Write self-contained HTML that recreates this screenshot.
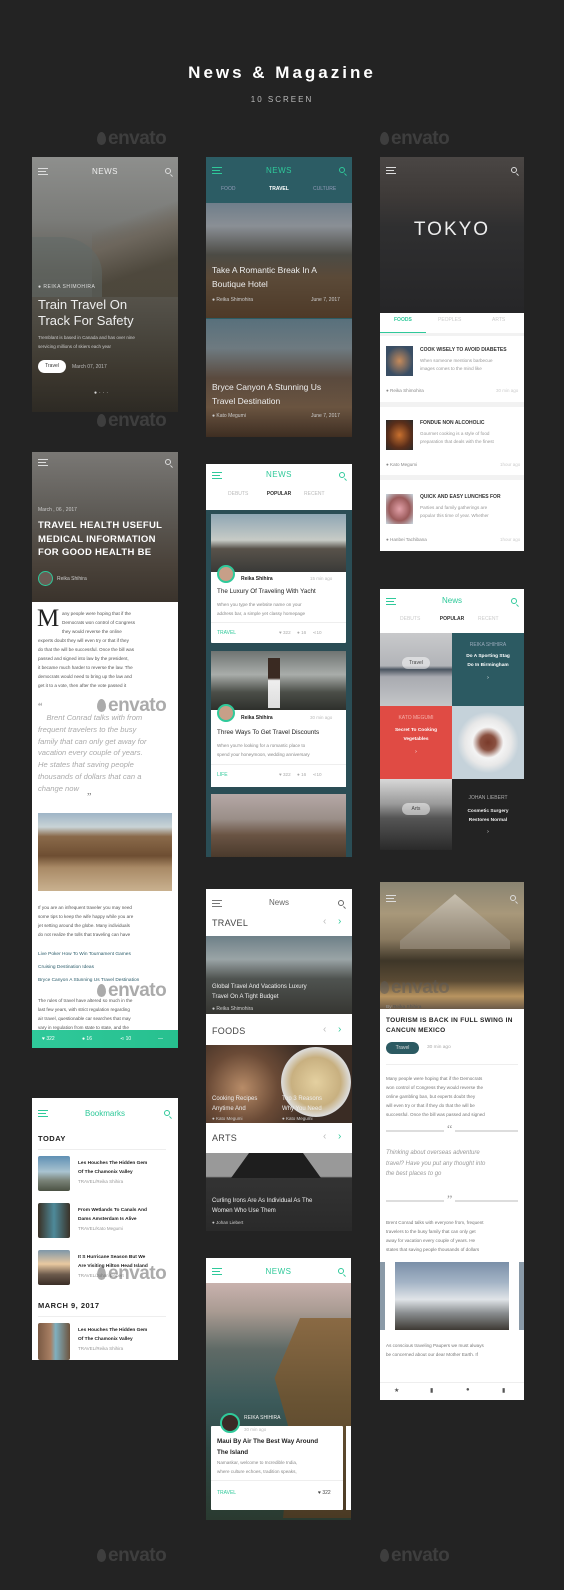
<!DOCTYPE html>
<html><head><meta charset="utf-8"><style>
*{margin:0;padding:0;box-sizing:border-box}
body{width:564px;height:1590px;background:#232323;position:relative;overflow:hidden;font-family:"Liberation Sans",sans-serif}
.a{position:absolute}
.scr{position:absolute;overflow:hidden;background:#fff}
.wm{position:absolute;color:#5a5a5a;font-size:19px;font-weight:bold;letter-spacing:-0.5px;opacity:.5}
.wm:before{content:"";display:inline-block;width:9px;height:13px;border-radius:50% 50% 50% 50%/60% 60% 40% 40%;background:#5a5a5a;margin-right:2px;vertical-align:-1px}
.t{position:absolute;white-space:nowrap}
.ham{position:absolute;width:10px;height:7px;border-top:1.5px solid;border-bottom:1.5px solid}
.ham:after{content:"";position:absolute;left:0;top:1.5px;width:8px;border-top:1.5px solid}
.srch{position:absolute;width:6px;height:6px;border:1.3px solid;border-radius:50%}
.srch:after{content:"";position:absolute;width:3px;border-top:1.3px solid;transform:rotate(45deg);left:4px;top:6px;border-color:inherit}
.gr{color:#999}
.g{color:#2fc99a}
</style></head><body>

<div class="t" style="left:0;width:564px;text-align:center;top:63px;color:#fff;font-size:17px;font-weight:bold;letter-spacing:3px">News &amp; Magazine</div>
<div class="t" style="left:0;width:564px;text-align:center;top:95px;color:#bbb;font-size:8px;letter-spacing:2px">10 SCREEN</div>

<div class="wm" style="left:97px;top:128px">envato</div>
<div class="wm" style="left:380px;top:128px">envato</div>

<!-- COL1 screen1 -->
<div class="scr" style="left:32px;top:157px;width:146px;height:255px;background:linear-gradient(180deg,#8e8f8d 0%,#7a7b78 25%,#5e5a52 45%,#4d4a42 65%,#3c372e 85%,#2d2a24 100%)">
 <div class="a" style="left:60px;top:30px;width:100px;height:110px;background:linear-gradient(160deg,transparent 30%,#6d655a 45%,#4a4438 70%);opacity:.8"></div>
 <div class="a" style="left:0;top:80px;width:70px;height:60px;background:#5f6a68;opacity:.5;border-radius:0 60% 0 0"></div>
 <div class="ham" style="left:6px;top:11px;color:#ddd"></div>
 <div class="t" style="left:0;width:146px;text-align:center;top:10px;color:#eee;font-size:8px;letter-spacing:.5px">NEWS</div>
 <div class="srch" style="right:7px;top:11px;color:#ddd"></div>
 <div class="t" style="left:6px;top:127px;color:#ddd;font-size:5px;letter-spacing:.5px">● REIKA SHIMOHIRA</div>
 <div class="t" style="left:6px;top:140px;color:#eee;font-size:13px;line-height:16px">Train Travel On<br>Track For Safety</div>
 <div class="t" style="left:6px;top:176px;color:#ccc;font-size:4.5px;line-height:9px">Tremblant is based in Canada and has over nine<br>servicing millions of skiers each year</div>
 <div class="a" style="left:6px;top:203px;width:28px;height:13px;background:#fff;border-radius:7px;font-size:5px;text-align:center;line-height:13px;color:#333">Travel</div>
 <div class="t" style="left:40px;top:207px;color:#bbb;font-size:5px">March 07, 2017</div>
 <div class="t" style="left:62px;top:233px;color:#ddd;font-size:5px;letter-spacing:2px">●···</div>
</div>
<div class="wm" style="left:97px;top:410px">envato</div>

<!-- COL1 screen2 -->
<div class="scr" style="left:32px;top:452px;width:146px;height:596px">
 <div class="a" style="left:0;top:0;width:146px;height:150px;background:linear-gradient(180deg,#7a7875 0%,#5e5b56 40%,#4a423a 75%,#3a332c 100%)"></div>
 <div class="ham" style="left:6px;top:7px;color:#ddd"></div>
 <div class="srch" style="right:7px;top:7px;color:#ddd"></div>
 <div class="t" style="left:6px;top:55px;color:#ccc;font-size:5px">March , 06 , 2017</div>
 <div class="t" style="left:6px;top:67px;color:#fff;font-size:9.5px;font-weight:bold;line-height:13.5px;letter-spacing:.3px">TRAVEL HEALTH USEFUL<br>MEDICAL INFORMATION<br>FOR GOOD HEALTH BE</div>
 <div class="a" style="left:6px;top:119px;width:15px;height:15px;border-radius:50%;border:1.5px solid #2fc99a;background:#6a5c55"></div>
 <div class="t" style="left:25px;top:124px;color:#ccc;font-size:5px">Reika Shihira</div>
 <div class="t" style="left:5px;top:153px;color:#222;font-size:25px;font-family:'Liberation Serif',serif;font-weight:normal">M</div>
 <div class="t" style="left:30px;top:157px;color:#555;font-size:4.6px;line-height:9px">any people were hoping that if the<br>Democrats won control of Congress<br>they would reverse the online</div>
 <div class="t" style="left:6px;top:184px;color:#555;font-size:4.6px;line-height:9px">experts doubt they will even try or that if they<br>do that the will be successful. Once the bill was<br>passed and signed into law by the president,<br>it became much harder to reverse the law. The<br>democrats would need to bring up the law and<br>get it to a vote, then after the vote passed it</div>
 <div class="t" style="left:6px;top:250px;color:#777;font-size:10px;font-family:'Liberation Serif',serif">“</div>
 <div class="t" style="left:6px;top:260px;color:#aaa;font-size:7.6px;font-style:italic;line-height:11.8px">&nbsp;&nbsp;&nbsp;&nbsp;Brent Conrad talks with from<br>frequent travelers to the busy<br>family that can only get away for<br>vacation every couple of years.<br>He states that saving people<br>thousands of dollars that can a<br>change now</div>
 <div class="t" style="left:55px;top:340px;color:#777;font-size:10px;font-family:'Liberation Serif',serif">”</div>
 <div class="a" style="left:6px;top:361px;width:134px;height:78px;background:linear-gradient(180deg,#9fb5c6 0%,#c9d3d6 18%,#8a6a4a 30%,#6e4e32 55%,#a98a66 70%,#c9b18f 100%)"></div>
 <div class="t" style="left:6px;top:451px;color:#555;font-size:4.6px;line-height:9px">If you are an infrequent traveler you may need<br>some tips to keep the wife happy while you are<br>jet setting around the globe. Many individuals<br>do not realize the tolls that traveling can have</div>
 <div class="t" style="left:6px;top:496px;color:#2c5d6b;font-size:4.8px;line-height:13px">Live Poker How To Win Tournament Games<br>Cruising Destination Ideas<br>Bryce Canyon A Stunning Us Travel Destination</div>
 <div class="t" style="left:6px;top:544px;color:#555;font-size:4.6px;line-height:9px">The rules of travel have altered so much in the<br>last few years, with strict regulation regarding<br>air travel, questionable car searches that may<br>vary in regulation from state to state, and the</div>
 <div class="a" style="left:0;top:578px;width:146px;height:18px;background:linear-gradient(90deg,#2fc99a,#27c08f);color:#fff;font-size:5px;line-height:18px">
  <span class="a" style="left:10px">♥ 322</span><span class="a" style="left:50px">● 16</span><span class="a" style="left:88px">⋖ 10</span><span class="a" style="left:126px">—</span>
 </div>
</div>
<div class="wm" style="left:97px;top:695px">envato</div>
<div class="wm" style="left:97px;top:980px">envato</div>

<!-- COL1 bookmarks -->
<div class="scr" style="left:32px;top:1098px;width:146px;height:262px">
 <div class="ham" style="left:6px;top:12px;color:#2fc99a"></div>
 <div class="t g" style="left:0;width:146px;text-align:center;top:11px;font-size:8px">Bookmarks</div>
 <div class="srch" style="right:8px;top:12px;color:#2fc99a"></div>
 <div class="t" style="left:6px;top:36px;color:#222;font-size:7.5px;font-weight:bold;letter-spacing:.5px">TODAY</div>
 <div class="a" style="left:6px;top:51px;width:128px;height:1px;background:#eee"></div>
 <div class="a" style="left:6px;top:58px;width:32px;height:35px;border-radius:2px;background:linear-gradient(180deg,#5f90b4,#a9c3d0 45%,#7a8378 70%,#4b5244)"></div>
 <div class="t" style="left:46px;top:61px;color:#222;font-size:4.8px;font-weight:bold;line-height:9px">Les Houches The Hidden Gem<br>Of The Chamonix Valley</div>
 <div class="t gr" style="left:46px;top:81px;font-size:4.5px">TRAVEL/Reika Shihira</div>
 <div class="a" style="left:6px;top:105px;width:32px;height:35px;border-radius:2px;background:linear-gradient(90deg,#3a3024,#4e8a9a 50%,#3a3228)"></div>
 <div class="t" style="left:46px;top:108px;color:#222;font-size:4.8px;font-weight:bold;line-height:9px">From Wetlands To Canals And<br>Dams Amsterdam Is Alive</div>
 <div class="t gr" style="left:46px;top:128px;font-size:4.5px">TRAVEL/Kato Megumi</div>
 <div class="a" style="left:6px;top:152px;width:32px;height:35px;border-radius:2px;background:linear-gradient(180deg,#7e97a9,#e9c9a0 40%,#6c5a4c 70%,#3a2e26)"></div>
 <div class="t" style="left:46px;top:155px;color:#222;font-size:4.8px;font-weight:bold;line-height:9px">It S Hurricane Season But We<br>Are Visiting Hilton Head Island</div>
 <div class="t gr" style="left:46px;top:175px;font-size:4.5px">TRAVEL/Johan Liebert</div>
 <div class="t" style="left:6px;top:203px;color:#222;font-size:7.5px;font-weight:bold;letter-spacing:.5px">MARCH 9, 2017</div>
 <div class="a" style="left:6px;top:218px;width:128px;height:1px;background:#eee"></div>
 <div class="a" style="left:6px;top:225px;width:32px;height:37px;border-radius:2px;background:linear-gradient(90deg,#7a5a44,#a98064 40%,#7fb0c0 55%,#6e543e)"></div>
 <div class="t" style="left:46px;top:228px;color:#222;font-size:4.8px;font-weight:bold;line-height:9px">Les Houches The Hidden Gem<br>Of The Chamonix Valley</div>
 <div class="t gr" style="left:46px;top:248px;font-size:4.5px">TRAVEL/Reika Shihira</div>
</div>
<div class="wm" style="left:97px;top:1263px">envato</div>

<!-- COL2 screenA -->
<div class="scr" style="left:206px;top:157px;width:146px;height:280px;background:#2c5c64">
 <div class="ham" style="left:6px;top:10px;color:#2fc99a"></div>
 <div class="t g" style="left:0;width:146px;text-align:center;top:9px;font-size:8px;letter-spacing:.5px">NEWS</div>
 <div class="srch" style="right:7px;top:10px;color:#2fc99a"></div>
 <div class="t" style="left:15px;top:29px;color:#aac;font-size:5px;opacity:.8">FOOD</div>
 <div class="t" style="left:0;width:146px;text-align:center;top:29px;color:#fff;font-size:5px;font-weight:bold">TRAVEL</div>
 <div class="t" style="left:107px;top:29px;color:#aac;font-size:5px;opacity:.8">CULTURE</div>
 <div class="a" style="left:0;top:46px;width:146px;height:115px;background:linear-gradient(180deg,#6f7e8a 0%,#8a8f95 20%,#4c4b45 45%,#5b4a38 65%,#4e3a28 100%)"></div>
 <div class="t" style="left:6px;top:106px;color:#eee;font-size:8.5px;line-height:14px">Take A Romantic Break In A<br>Boutique Hotel</div>
 <div class="t" style="left:6px;top:140px;color:#ccc;font-size:5px">● Reika Shimohira</div>
 <div class="t" style="left:105px;top:140px;color:#ccc;font-size:5px">June 7, 2017</div>
 <div class="a" style="left:0;top:162px;width:146px;height:118px;background:linear-gradient(180deg,#58707c 0%,#6e7a80 25%,#5a4a3e 50%,#6a5440 75%,#3e2e22 100%)"></div>
 <div class="t" style="left:6px;top:223px;color:#eee;font-size:8.5px;line-height:14px">Bryce Canyon A Stunning Us<br>Travel Destination</div>
 <div class="t" style="left:6px;top:256px;color:#ccc;font-size:5px">● Kato Megumi</div>
 <div class="t" style="left:105px;top:256px;color:#ccc;font-size:5px">June 7, 2017</div>
</div>

<!-- COL2 screenB -->
<div class="scr" style="left:206px;top:464px;width:146px;height:393px;background:#2a4d55">
 <div class="a" style="left:0;top:0;width:146px;height:46px;background:#fff"></div>
 <div class="ham" style="left:6px;top:8px;color:#2fc99a"></div>
 <div class="t g" style="left:0;width:146px;text-align:center;top:6px;font-size:8px;letter-spacing:.5px">NEWS</div>
 <div class="srch" style="right:7px;top:8px;color:#2fc99a"></div>
 <div class="t" style="left:22px;top:27px;color:#bbb;font-size:5px">DEBUTS</div>
 <div class="t" style="left:0;width:146px;text-align:center;top:27px;color:#333;font-size:5px;font-weight:bold">POPULAR</div>
 <div class="t" style="left:98px;top:27px;color:#bbb;font-size:5px">RECENT</div>
 <div class="a" style="left:5px;top:50px;width:135px;height:129px;background:#fff;border-radius:1px"></div>
 <div class="a" style="left:5px;top:50px;width:135px;height:58px;background:linear-gradient(180deg,#8fa6b4,#c7cbc6 45%,#58524a 60%,#3a3a38)"></div>
 <div class="a" style="left:11px;top:101px;width:18px;height:18px;border-radius:50%;background:#c79f88;border:2px solid #2fc99a"></div>
 <div class="t" style="left:35px;top:112px;color:#222;font-size:5px;font-weight:bold">Reika Shihira</div>
 <div class="t" style="left:104px;top:112px;color:#bbb;font-size:4.5px">15 min ago</div>
 <div class="t" style="left:11px;top:124px;color:#222;font-size:6.3px">The Luxury Of Traveling With Yacht</div>
 <div class="t" style="left:11px;top:136px;color:#888;font-size:4.6px;line-height:9px">When you type the website name on your<br>address bar, a simple yet classy homepage</div>
 <div class="a" style="left:5px;top:158px;width:135px;height:1px;background:#eee"></div>
 <div class="t g" style="left:11px;top:166px;font-size:5px">TRAVEL</div>
 <div class="t" style="left:73px;top:166px;color:#aaa;font-size:4.6px">♥ 322 &nbsp;&nbsp;&nbsp; ● 16 &nbsp;&nbsp;&nbsp; ⋖10</div>
 <div class="a" style="left:5px;top:187px;width:135px;height:136px;background:#fff"></div>
 <div class="a" style="left:5px;top:187px;width:135px;height:59px;background:linear-gradient(180deg,#6f7472,#a9adaa 40%,#4b4e48 70%,#2e302c)"></div>
 <div class="a" style="left:62px;top:194px;width:12px;height:50px;background:linear-gradient(180deg,#3a2a22 0%,#3a2a22 40%,#eee 45%,#ddd)"></div>
 <div class="a" style="left:11px;top:240px;width:18px;height:18px;border-radius:50%;background:#c79f88;border:2px solid #2fc99a"></div>
 <div class="t" style="left:35px;top:251px;color:#222;font-size:5px;font-weight:bold">Reika Shihira</div>
 <div class="t" style="left:104px;top:251px;color:#bbb;font-size:4.5px">30 min ago</div>
 <div class="t" style="left:11px;top:265px;color:#222;font-size:6.3px">Three Ways To Get Travel Discounts</div>
 <div class="t" style="left:11px;top:277px;color:#888;font-size:4.6px;line-height:9px">When you're looking for a romantic place to<br>spend your honeymoon, wedding anniversary</div>
 <div class="a" style="left:5px;top:300px;width:135px;height:1px;background:#eee"></div>
 <div class="t g" style="left:11px;top:308px;font-size:5px">LIFE</div>
 <div class="t" style="left:73px;top:308px;color:#aaa;font-size:4.6px">♥ 322 &nbsp;&nbsp;&nbsp; ● 16 &nbsp;&nbsp;&nbsp; ⋖10</div>
 <div class="a" style="left:5px;top:330px;width:135px;height:63px;background:linear-gradient(180deg,#b5a8a6,#9a8e88 40%,#6a5444 65%,#4a3a2c)"></div>
</div>

<!-- COL2 screenC -->
<div class="scr" style="left:206px;top:889px;width:146px;height:342px">
 <div class="ham" style="left:6px;top:11px;color:#777"></div>
 <div class="t" style="left:0;width:146px;text-align:center;top:9px;color:#666;font-size:8px">News</div>
 <div class="srch" style="right:8px;top:11px;color:#666"></div>
 <div class="t" style="left:6px;top:29px;color:#444;font-size:9px;letter-spacing:.3px">TRAVEL</div>
 <div class="t" style="left:117px;top:27px;color:#bbb;font-size:10px">‹</div><div class="t g" style="left:132px;top:27px;font-size:10px">›</div>
 <div class="a" style="left:0;top:47px;width:146px;height:78px;background:linear-gradient(180deg,#6e8088,#9aa4a6 30%,#4f5350 55%,#363632)"></div>
 <div class="t" style="left:6px;top:93px;color:#eee;font-size:6px;line-height:10px">Global Travel And Vacations Luxury<br>Travel On A Tight Budget</div>
 <div class="t" style="left:6px;top:117px;color:#ccc;font-size:5px">● Reika Shimohira</div>
 <div class="a" style="left:0;top:125px;width:146px;height:31px;background:#fff;box-shadow:0 2px 2px rgba(0,0,0,.15)"></div>
 <div class="t" style="left:6px;top:137px;color:#444;font-size:9px;letter-spacing:.3px">FOODS</div>
 <div class="t" style="left:117px;top:135px;color:#bbb;font-size:10px">‹</div><div class="t g" style="left:132px;top:135px;font-size:10px">›</div>
 <div class="a" style="left:0;top:156px;width:146px;height:78px;background:radial-gradient(circle at 25% 55%,#b88c68 0,#6a4a36 30%,#3a2c24 60%),#3a2c24"></div>
 <div class="a" style="left:75px;top:158px;width:70px;height:70px;border-radius:50%;background:radial-gradient(#e4d0a0,#c8b080 50%,#ddd 70%,#666 72%)"></div>
 <div class="t" style="left:6px;top:205px;color:#eee;font-size:6px;line-height:10px">Cooking Recipes<br>Anytime And</div>
 <div class="t" style="left:76px;top:205px;color:#eee;font-size:6px;line-height:10px">Top 3 Reasons<br>Why You Need</div>
 <div class="t" style="left:6px;top:227px;color:#ccc;font-size:4.5px">● Kato Megumi</div>
 <div class="t" style="left:76px;top:227px;color:#ccc;font-size:4.5px">● Kato Megumi</div>
 <div class="a" style="left:0;top:234px;width:146px;height:30px;background:#fff"></div>
 <div class="t" style="left:6px;top:244px;color:#444;font-size:9px;letter-spacing:.3px">ARTS</div>
 <div class="t" style="left:117px;top:242px;color:#bbb;font-size:10px">‹</div><div class="t g" style="left:132px;top:242px;font-size:10px">›</div>
 <div class="a" style="left:0;top:264px;width:146px;height:78px;background:linear-gradient(180deg,#999 0%,#999 30%,#333 32%,#2a2a2a)"></div>
 <div class="a" style="left:25px;top:264px;width:90px;height:25px;background:#1e1e1e;clip-path:polygon(20% 0,80% 0,100% 100%,0 100%)"></div>
 <div class="t" style="left:6px;top:307px;color:#eee;font-size:6px;line-height:10px">Curling Irons Are As Individual As The<br>Women Who Use Them</div>
 <div class="t" style="left:6px;top:331px;color:#ccc;font-size:4.5px">● Johan Liebert</div>
</div>

<!-- COL2 screenD -->
<div class="scr" style="left:206px;top:1258px;width:145px;height:262px;background:#fff">
 <div class="ham" style="left:6px;top:10px;color:#2fc99a"></div>
 <div class="t g" style="left:0;width:145px;text-align:center;top:9px;font-size:8px;letter-spacing:.5px">NEWS</div>
 <div class="srch" style="right:7px;top:10px;color:#2fc99a"></div>
 <div class="a" style="left:0;top:25px;width:145px;height:237px;background:linear-gradient(180deg,#c9b2ae 0%,#a99b92 12%,#5f6a66 28%,#3c5a5a 50%,#2e4844 70%,#2a3a30 100%)"></div>
 <div class="a" style="left:60px;top:60px;width:85px;height:200px;background:linear-gradient(180deg,#8a6a44,#6a5434 40%,#4a3a24);clip-path:polygon(40% 0,100% 0,100% 100%,20% 100%,30% 60%,10% 30%)"></div>
 <div class="a" style="left:5px;top:168px;width:132px;height:84px;background:#fff;border-radius:1px"></div>
 <div class="a" style="left:140px;top:168px;width:5px;height:84px;background:#fff"></div>
 <div class="a" style="left:14px;top:155px;width:20px;height:20px;border-radius:50%;background:#3a2a26;border:2px solid #2fc99a"></div>
 <div class="t" style="left:38px;top:157px;color:#eee;font-size:5px">REIKA SHIHIRA</div>
 <div class="t" style="left:38px;top:169px;color:#bbb;font-size:4.5px">30 min ago</div>
 <div class="t" style="left:11px;top:179px;color:#222;font-size:6.3px;font-weight:bold;line-height:10.5px">Maui By Air The Best Way Around<br>The Island</div>
 <div class="t" style="left:11px;top:201px;color:#888;font-size:4.6px;line-height:8.5px">Namaskar, welcome to Incredible India,<br>where culture echoes, tradition speaks,</div>
 <div class="a" style="left:5px;top:222px;width:132px;height:1px;background:#eee"></div>
 <div class="t g" style="left:11px;top:232px;font-size:5px">TRAVEL</div>
 <div class="t" style="left:112px;top:232px;color:#444;font-size:5px">♥ 322</div>
</div>

<!-- COL3 Tokyo -->
<div class="scr" style="left:380px;top:157px;width:144px;height:394px;background:#fff">
 <div class="a" style="left:0;top:0;width:144px;height:156px;background:linear-gradient(180deg,#4a4644 0%,#3e3a38 25%,#2f2f30 45%,#262628 100%)"></div>
 <div class="ham" style="left:6px;top:10px;color:#ddd"></div>
 <div class="srch" style="right:7px;top:10px;color:#ddd"></div>
 <div class="t" style="left:0;width:144px;text-align:center;top:62px;color:#eee;font-size:19px;letter-spacing:2px">TOKYO</div>
 <div class="t g" style="left:14px;top:160px;font-size:5px;font-weight:bold">FOODS</div>
 <div class="t" style="left:58px;top:160px;color:#ccc;font-size:5px">PEOPLES</div>
 <div class="t" style="left:112px;top:160px;color:#ccc;font-size:5px">ARTS</div>
 <div class="a" style="left:0;top:175px;width:46px;height:1.5px;background:#2fc99a"></div>
 <div class="a" style="left:0;top:176px;width:144px;height:3px;background:#f2f2f2"></div>
 <div class="a" style="left:6px;top:189px;width:27px;height:30px;background:radial-gradient(#c58a5a,#3a4e64 70%)"></div>
 <div class="t" style="left:40px;top:190px;color:#333;font-size:5px;font-weight:bold">COOK WISELY TO AVOID DIABETES</div>
 <div class="t" style="left:40px;top:200px;color:#999;font-size:4.6px;line-height:8px">When someone mentions barbecue<br>images comes to the mind like</div>
 <div class="t" style="left:6px;top:231px;color:#888;font-size:4.6px">● Reika Shimohira</div>
 <div class="t" style="left:116px;top:231px;color:#ccc;font-size:4.5px">30 min ago</div>
 <div class="a" style="left:0;top:245px;width:144px;height:5px;background:#f2f2f2"></div>
 <div class="a" style="left:6px;top:263px;width:27px;height:30px;background:radial-gradient(#c8702e,#5a2e1a 60%,#2a2a2a)"></div>
 <div class="t" style="left:40px;top:263px;color:#333;font-size:5px;font-weight:bold">FONDUE NON ALCOHOLIC</div>
 <div class="t" style="left:40px;top:273px;color:#999;font-size:4.6px;line-height:8px">Gourmet cooking is a style of food<br>preparation that deals with the finest</div>
 <div class="t" style="left:6px;top:305px;color:#888;font-size:4.6px">● Kato Megumi</div>
 <div class="t" style="left:120px;top:305px;color:#ccc;font-size:4.5px">1hour ago</div>
 <div class="a" style="left:0;top:318px;width:144px;height:5px;background:#f2f2f2"></div>
 <div class="a" style="left:6px;top:337px;width:27px;height:30px;background:radial-gradient(#e2a0a8,#9a5a5a 55%,#c8d8e0)"></div>
 <div class="t" style="left:40px;top:337px;color:#333;font-size:5px;font-weight:bold">QUICK AND EASY LUNCHES FOR</div>
 <div class="t" style="left:40px;top:347px;color:#999;font-size:4.6px;line-height:8px">Parties and family gatherings are<br>popular this time of year. Whether</div>
 <div class="t" style="left:6px;top:380px;color:#888;font-size:4.6px">● Hanbei Tachibana</div>
 <div class="t" style="left:120px;top:380px;color:#ccc;font-size:4.5px">1hour ago</div>
</div>

<!-- COL3 popular grid -->
<div class="scr" style="left:380px;top:589px;width:144px;height:261px;background:#232323">
 <div class="a" style="left:0;top:0;width:144px;height:44px;background:#fff"></div>
 <div class="ham" style="left:6px;top:9px;color:#2fc99a"></div>
 <div class="t g" style="left:0;width:144px;text-align:center;top:7px;font-size:8px">News</div>
 <div class="srch" style="right:7px;top:9px;color:#2fc99a"></div>
 <div class="t" style="left:20px;top:27px;color:#ccc;font-size:5px">DEBUTS</div>
 <div class="t" style="left:0;width:144px;text-align:center;top:27px;color:#333;font-size:5px;font-weight:bold">POPULAR</div>
 <div class="t" style="left:98px;top:27px;color:#ccc;font-size:5px">RECENT</div>
 <div class="a" style="left:0;top:44px;width:72px;height:73px;background:linear-gradient(180deg,#c8c9cb,#b2b4b8 45%,#4a5460 50%,#a8aab0 60%,#c4c6c8)"></div>
 <div class="a" style="left:22px;top:68px;width:28px;height:12px;border-radius:6px;background:rgba(255,255,255,.5);font-size:5px;text-align:center;line-height:12px;color:#444">Travel</div>
 <div class="a" style="left:72px;top:44px;width:72px;height:73px;background:#2c5a62"></div>
 <div class="t" style="left:72px;width:72px;text-align:center;top:53px;color:#9ab;font-size:5px">REIKA SHIHIRA</div>
 <div class="t" style="left:72px;width:72px;text-align:center;top:63px;color:#fff;font-size:4.8px;font-weight:bold;line-height:9px">Do A Sporting Stag<br>Do In Birmingham</div>
 <div class="t" style="left:72px;width:72px;text-align:center;top:86px;color:#fff;font-size:5px">›</div>
 <div class="a" style="left:0;top:117px;width:72px;height:73px;background:#e04b44"></div>
 <div class="t" style="left:0;width:72px;text-align:center;top:126px;color:#f5b0aa;font-size:5px">KATO MEGUMI</div>
 <div class="t" style="left:0;width:72px;text-align:center;top:137px;color:#fff;font-size:4.8px;font-weight:bold;line-height:9px">Secret To Cooking<br>Vegetables</div>
 <div class="t" style="left:0;width:72px;text-align:center;top:160px;color:#fff;font-size:5px">›</div>
 <div class="a" style="left:72px;top:117px;width:72px;height:73px;background:radial-gradient(circle at 50% 50%,#7a3a2a 0,#8a5040 15%,#f4f4f4 30%,#e8e8e8 45%,#c5d2da 60%)"></div>
 <div class="a" style="left:0;top:190px;width:72px;height:71px;background:linear-gradient(180deg,#d8d8d8,#9a9a9a 35%,#555 55%,#2a2a2a)"></div>
 <div class="a" style="left:22px;top:214px;width:28px;height:12px;border-radius:6px;background:rgba(255,255,255,.5);font-size:5px;text-align:center;line-height:12px;color:#444">Arts</div>
 <div class="t" style="left:72px;width:72px;text-align:center;top:206px;color:#aaa;font-size:5px">JOHAN LIEBERT</div>
 <div class="t" style="left:72px;width:72px;text-align:center;top:218px;color:#eee;font-size:4.8px;font-weight:bold;line-height:9px">Cosmetic Surgery<br>Restores Normal</div>
 <div class="t" style="left:72px;width:72px;text-align:center;top:240px;color:#eee;font-size:5px">›</div>
</div>

<!-- COL3 article -->
<div class="scr" style="left:380px;top:882px;width:144px;height:518px">
 <div class="a" style="left:0;top:0;width:144px;height:127px;background:linear-gradient(180deg,#8a8472 0%,#a8987a 25%,#8a7a60 45%,#3e3628 62%,#5a4a34 78%,#b89460 90%,#6a5a48 100%)"></div>
 <div class="a" style="left:20px;top:12px;width:110px;height:55px;background:linear-gradient(180deg,#c8c0b0,#8a7e6c);clip-path:polygon(50% 0,100% 85%,100% 100%,0 100%,0 85%)"></div>
 <div class="ham" style="left:6px;top:13px;color:#ddd"></div>
 <div class="srch" style="right:8px;top:13px;color:#ddd"></div>
 <div class="t" style="left:6px;top:123px;color:#999;font-size:4.8px">By <span style="color:#555">Reika Shihira</span></div>
 <div class="t" style="left:6px;top:134px;color:#222;font-size:6.5px;font-weight:bold;line-height:10px;letter-spacing:.3px">TOURISM IS BACK IN FULL SWING IN<br>CANCUN MEXICO</div>
 <div class="a" style="left:6px;top:160px;width:33px;height:12px;border-radius:6px;background:#2c5a62;color:#ddd;font-size:5px;text-align:center;line-height:12px">Travel</div>
 <div class="t" style="left:47px;top:163px;color:#aaa;font-size:4.8px">30 min ago</div>
 <div class="a" style="left:6px;top:182px;width:132px;height:1px;background:#eee"></div>
 <div class="t" style="left:6px;top:192px;color:#777;font-size:4.6px;line-height:9px">Many people were hoping that if the Democrats<br>won control of Congress they would reverse the<br>online gambling ban, but experts doubt they<br>will even try or that if they do that the will be<br>successful. Once the bill was passed and signed</div>
 <div class="a" style="left:6px;top:248px;width:132px;height:1.5px;background:#ddd"></div>
 <div class="t" style="left:64px;top:240px;color:#999;font-size:12px;background:#fff;padding:0 3px;font-family:'Liberation Serif',serif">“</div>
 <div class="t" style="left:6px;top:266px;color:#999;font-size:6px;font-style:italic;line-height:10.5px">Thinking about overseas adventure<br>travel? Have you put any thought into<br>the best places to go</div>
 <div class="a" style="left:6px;top:318px;width:132px;height:1.5px;background:#ddd"></div>
 <div class="t" style="left:64px;top:310px;color:#999;font-size:12px;background:#fff;padding:0 3px;font-family:'Liberation Serif',serif">”</div>
 <div class="t" style="left:6px;top:336px;color:#777;font-size:4.6px;line-height:9px">Brent Conrad talks with everyone from, frequent<br>travelers to the busy family that can only get<br>away for vacation every couple of years. He<br>states that saving people thousands of dollars</div>
 <div class="a" style="left:0;top:380px;width:5px;height:68px;background:#8a9aa8"></div>
 <div class="a" style="left:15px;top:380px;width:114px;height:68px;background:linear-gradient(180deg,#7a8fa8,#a4b4c6 30%,#e0e4e8 55%,#8a8e90 75%,#3e3a34)"></div>
 <div class="a" style="left:139px;top:380px;width:5px;height:68px;background:#8a9aa8"></div>
 <div class="t" style="left:6px;top:459px;color:#777;font-size:4.6px;line-height:9px">As conscious traveling Paupers we must always<br>be concerned about our dear Mother Earth. If</div>
 <div class="a" style="left:0;top:500px;width:144px;height:1px;background:#eee"></div>
 <div class="t" style="left:14px;top:505px;color:#555;font-size:6px">★</div>
 <div class="t" style="left:50px;top:505px;color:#555;font-size:6px">▮</div>
 <div class="t" style="left:86px;top:505px;color:#555;font-size:6px">●</div>
 <div class="t" style="left:122px;top:505px;color:#555;font-size:6px">▮</div>
</div>
<div class="wm" style="left:380px;top:977px">envato</div>

<div class="wm" style="left:97px;top:1545px">envato</div>
<div class="wm" style="left:380px;top:1545px">envato</div>
</body></html>
